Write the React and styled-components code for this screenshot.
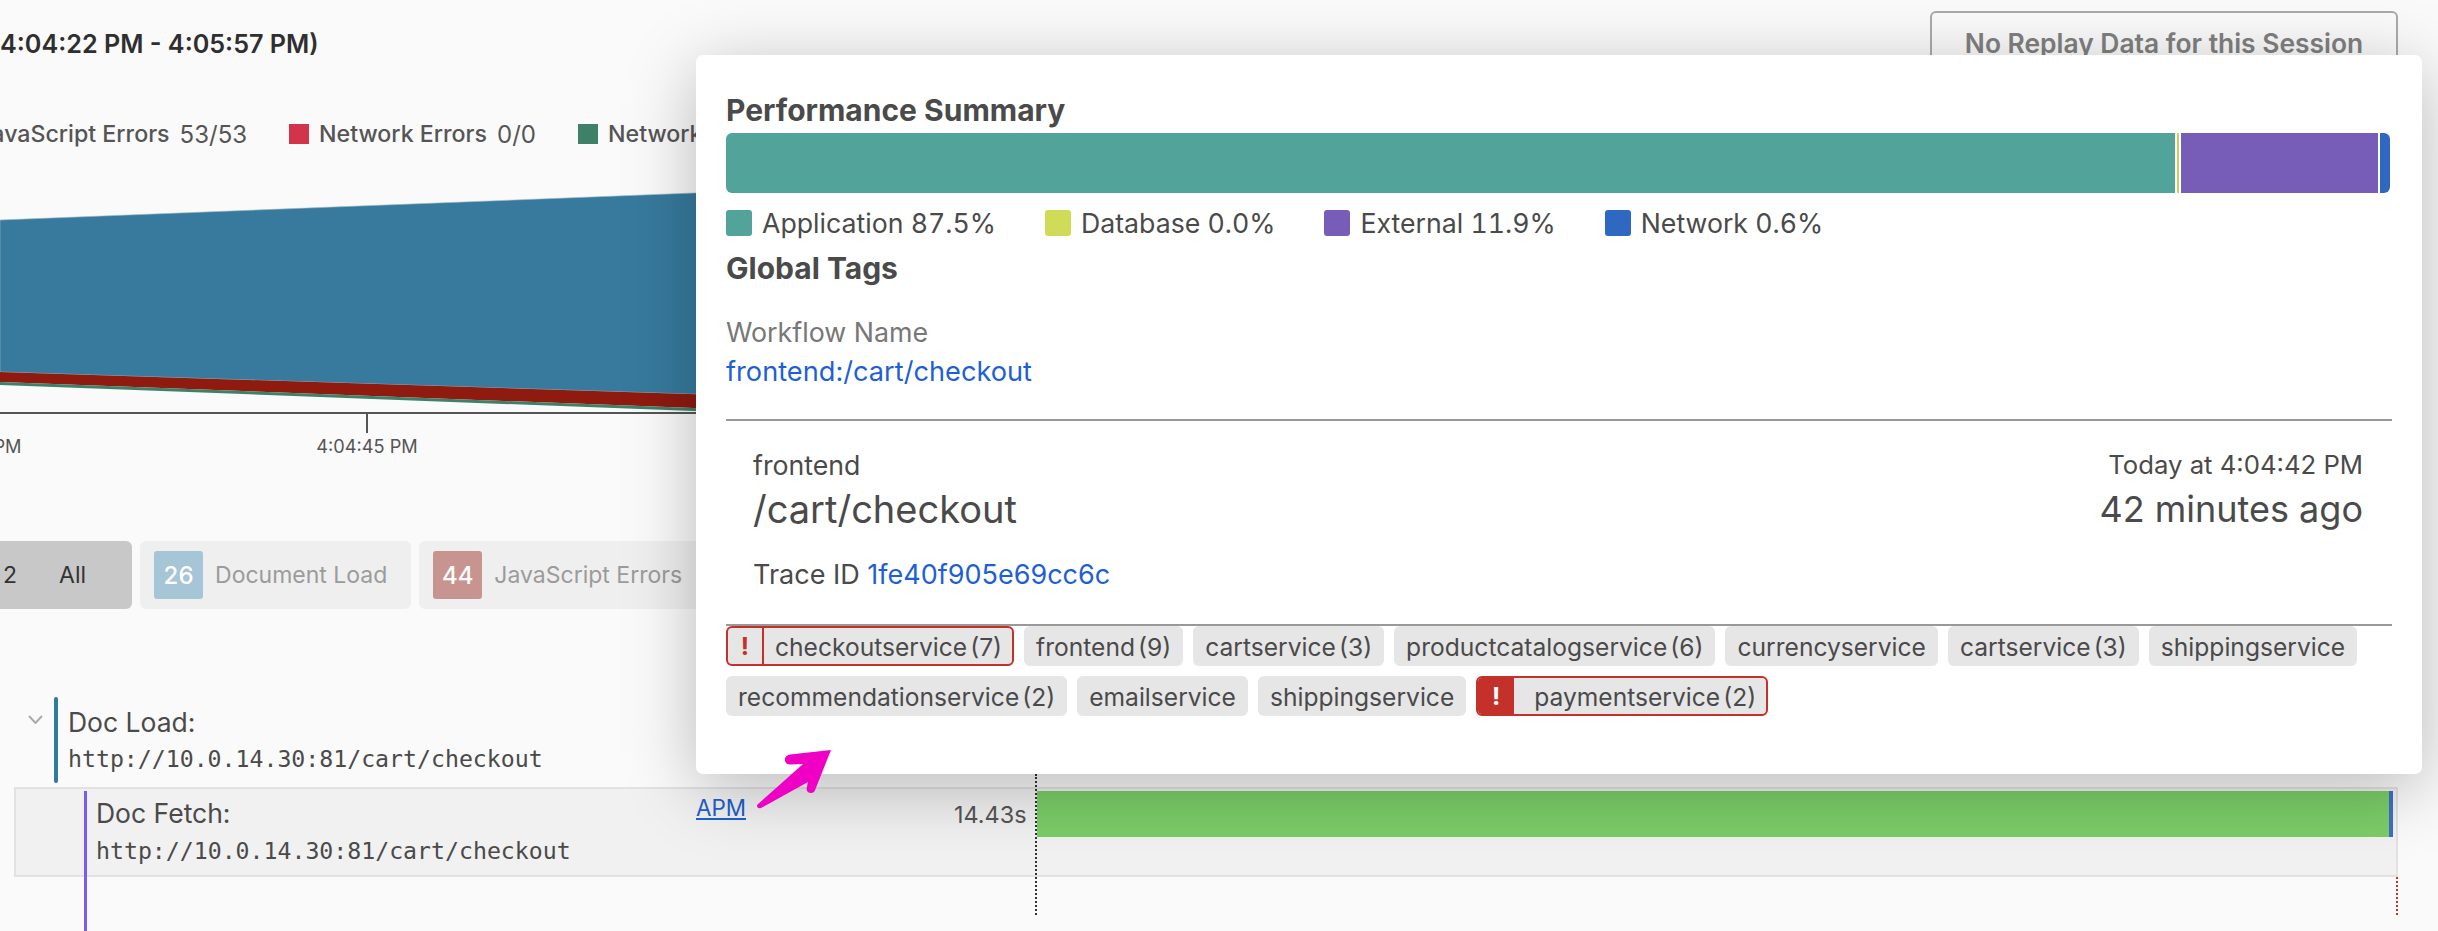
import React from 'react';
import styled, { createGlobalStyle } from 'styled-components';

const GlobalStyle = createGlobalStyle`
  html, body {
    margin: 0;
    padding: 0;
    background: #fafafa;
  }
  body {
    font-family: Inter, "Noto Sans", sans-serif;
    color: #4a4a4a;
  }
`;

const Page = styled.div`
  position: relative;
  width: 2438px;
  height: 931px;
  overflow: hidden;
  background: #fafafa;
`;

const Header = styled.header`
  display: flex;
  justify-content: space-between;
  align-items: flex-start;
  box-sizing: border-box;
  height: 100px;
  padding: 11px 40px 0 0;
`;

const SessionTitle = styled.h1`
  margin: 16px 0 0;
  font-size: 25.2px;
  line-height: 34px;
  font-weight: 600;
  color: #2f2f2f;
`;

const ReplayButton = styled.button`
  width: 468px;
  height: 64px;
  border: 2px solid #aaa;
  border-radius: 6px;
  background: transparent;
  font-family: inherit;
  font-size: 26.4px;
  font-weight: 600;
  color: #808080;
`;

const Legend = styled.div`
  display: flex;
  align-items: center;
  gap: 42px;
  height: 22px;
  margin: 23px 0 0 -22px;
`;

const LegendItem = styled.div`
  display: flex;
  align-items: center;
  gap: 10px;
  font-size: 24px;
  white-space: nowrap;
  color: #555;

  b {
    font-size: 23.2px;
    font-weight: 500;
  }
`;

const LegendSwatch = styled.span`
  width: 20px;
  height: 20px;
  background: ${props => props.$color};
`;

const Chart = styled.svg`
  display: block;
  width: 720px;
  height: 290px;
  margin-top: 35px;
`;

const AxisLabel = styled.text`
  font-size: 18.2px;
  fill: #555;
  text-anchor: middle;
`;

const Tabs = styled.div`
  display: flex;
  gap: 8px;
  height: 68px;
  margin: 71px 0 0 0;
`;

const Tab = styled.div`
  display: flex;
  align-items: center;
  flex-shrink: 0;
  gap: 12px;
  padding: 0 24px 0 14px;
  border-radius: 6px;
  background: #efefef;
  font-size: 23px;
  color: #9b9b9b;
  white-space: nowrap;
`;

const AllTab = styled(Tab)`
  gap: 42px;
  padding: 0 46px 0 3px;
  border-radius: 0 6px 6px 0;
  background: #c8c8c8;
  color: #333;
`;

const TabCount = styled.span`
  display: flex;
  align-items: center;
  justify-content: center;
  width: 49px;
  height: 48px;
  border-radius: 3px;
  background: ${props => props.$color};
  color: #fff;
  font-size: 24px;
  font-weight: 500;
`;

const TraceRows = styled.div`
  margin-top: 88px;
`;

const ParentRow = styled.div`
  display: flex;
  height: 86px;
  padding-left: 28px;
`;

const Chevron = styled.svg`
  width: 15px;
  height: 9px;
  margin: 18px 11px 0 0;
`;

const TreeBar = styled.div`
  flex-shrink: 0;
  width: 4px;
  height: 86px;
  border-radius: 2px;
  background: #2f7a9f;
`;

const SpanText = styled.div`
  padding-left: 10px;
`;

const SpanName = styled.div`
  font-size: 26.5px;
  line-height: 34px;
  margin-top: 8px;
`;

const SpanUrl = styled.div`
  font-family: "DejaVu Sans Mono", monospace;
  font-size: 23.2px;
  line-height: 36px;
  margin-top: 2px;
  white-space: nowrap;
`;

const FetchRow = styled.div`
  position: relative;
  display: flex;
  box-sizing: border-box;
  width: 2384px;
  height: 90px;
  margin: 4px 0 0 14px;
  border: 2px solid #e2e2e2;
  background: #f1f1f1;
`;

const FetchLine = styled.div`
  position: absolute;
  top: 2px;
  left: 68px;
  width: 3px;
  height: 150px;
  background: #7a5cf0;
`;

const FetchLabel = styled.div`
  width: 680px;
  flex-shrink: 0;
  padding-left: 80px;
  box-sizing: border-box;

  ${SpanName} {
    margin-top: 7px;
  }

  ${SpanUrl} {
    margin-top: 3px;
  }
`;

const ApmLink = styled.a`
  width: 258px;
  margin-top: 4px;
  flex-shrink: 0;
  font-size: 22.4px;
  line-height: 30px;
  color: #2160cc;
  text-decoration: underline;
`;

const Duration = styled.div`
  width: 80px;
  flex-shrink: 0;
  margin-top: 11px;
  font-size: 23.4px;
  line-height: 30px;
  text-align: right;
  padding-right: 8px;
  box-sizing: border-box;
  color: #555;
`;

const Waterfall = styled.div`
  display: flex;
  width: 1356px;
  height: 46px;
  margin: 2px 0 0 3px;
  background: #7bcd68;
`;

const WaterfallEnd = styled.div`
  width: 4px;
  margin-left: auto;
  background: #3f6fc8;
`;

const DashedLine = styled.div`
  position: absolute;
  left: ${props => props.$left}px;
  top: ${props => props.$top}px;
  height: ${props => props.$height}px;
  border-left: 2px dotted ${props => props.$color};
`;

const Panel = styled.section`
  position: absolute;
  top: 55px;
  left: 696px;
  box-sizing: border-box;
  width: 1726px;
  height: 719px;
  padding: 36px 30px 0;
  border-radius: 7px;
  background: #fff;
  box-shadow: 0 14px 70px rgba(0, 0, 0, 0.26);
`;

const PanelHeading = styled.h2`
  margin: 0;
  font-size: 30px;
  line-height: 38px;
  font-weight: 700;
  color: #4a4a4a;
`;

const SummaryBar = styled.div`
  display: flex;
  gap: 2px;
  width: 1664px;
  height: 60px;
  margin-top: 4px;
  border-radius: 6px;
  overflow: hidden;
`;

const SummarySegment = styled.div`
  width: ${props => props.$width}px;
  background: ${props => props.$color};
`;

const SummaryLegend = styled.div`
  display: flex;
  gap: 49px;
  height: 26px;
  margin: 17px 0 13px;
`;

const SummaryItem = styled.div`
  display: flex;
  align-items: center;
  gap: 10px;
  font-size: 26.7px;
  font-variant-numeric: tabular-nums;
  color: #4a4a4a;
  white-space: nowrap;
`;

const SummarySwatch = styled.span`
  width: 26px;
  height: 26px;
  border-radius: 3px;
  background: ${props => props.$color};
`;

const FieldLabel = styled.div`
  margin-top: 27px;
  font-size: 26.8px;
  line-height: 36px;
  color: #777;
`;

const BlueLink = styled.a`
  color: #1f5fd6;
`;

const WorkflowLink = styled(BlueLink)`
  display: block;
  margin-top: 4px;
  font-size: 27.2px;
  line-height: 36px;
`;

const Divider = styled.hr`
  width: 1666px;
  height: 2px;
  margin: ${props => props.$margin};
  border: none;
  background: #999;
`;

const TraceHead = styled.div`
  display: flex;
  justify-content: space-between;
  padding: 0 29px 0 27px;
`;

const TraceCol = styled.div`
  text-align: ${props => props.$align || 'left'};
`;

const TraceSmall = styled.div`
  margin-top: 26px;
  font-size: ${props => props.$size}px;
  line-height: 36px;
`;

const TraceLarge = styled.div`
  margin-top: 4px;
  font-size: ${props => props.$size}px;
  line-height: 44px;
`;

const TraceId = styled.div`
  margin-top: 26px;
  padding-left: 27px;
  font-size: 27px;
  line-height: 36px;
`;

const TagList = styled.div`
  display: flex;
  flex-wrap: wrap;
  gap: 10px;
  width: 1664px;
`;

const Tag = styled.div`
  display: flex;
  align-items: center;
  box-sizing: border-box;
  height: 40px;
  padding: 2px 12px 0;
  border-radius: 6px;
  background: #e6e6e6;
  font-size: 24.6px;
  color: #4a4a4a;
  white-space: nowrap;
`;

const TagCount = styled.span`
  margin-left: 3px;
`;

const ErrorTag = styled(Tag)`
  padding: 2px 10px 0 0;
  border: 2px solid #c4312b;
  overflow: hidden;
`;

const ErrorMark = styled.span`
  display: flex;
  align-items: center;
  justify-content: center;
  align-self: stretch;
  box-sizing: content-box;
  width: ${props => (props.$filled ? '36px' : '34px')};
  margin: -2px ${props => (props.$filled ? '20px' : '11px')} 0 0;
  font-weight: 700;
  background: ${props => (props.$filled ? '#c4312b' : 'transparent')};
  color: ${props => (props.$filled ? '#fff' : '#c4312b')};
  border-right: ${props => (props.$filled ? 'none' : '2px solid #c4312b')};
`;

const Arrow = styled.svg`
  position: absolute;
  left: 750px;
  top: 745px;
  width: 90px;
  height: 70px;
`;

const summary = [
  { color: '#52a399', width: 1449 },
  { color: '#c9d34d', width: 2 },
  { color: '#775cb8', width: 197 },
  { color: '#2e68c0', width: 10 },
];

const summaryLegend = [
  { color: '#52a399', label: 'Application', value: '87.5%' },
  { color: '#d0dc58', label: 'Database', value: '0.0%' },
  { color: '#775cb8', label: 'External', value: '11.9%' },
  { color: '#2e68c0', label: 'Network', value: '0.6%' },
];

const tags = [
  { name: 'checkoutservice', count: 7, error: 'outline' },
  { name: 'frontend', count: 9 },
  { name: 'cartservice', count: 3 },
  { name: 'productcatalogservice', count: 6 },
  { name: 'currencyservice' },
  { name: 'cartservice', count: 3 },
  { name: 'shippingservice' },
  { name: 'recommendationservice', count: 2 },
  { name: 'emailservice' },
  { name: 'shippingservice' },
  { name: 'paymentservice', count: 2, error: 'filled' },
];

function ServiceTag({ name, count, error }) {
  const Wrapper = error ? ErrorTag : Tag;
  return (
    <Wrapper>
      {error && <ErrorMark $filled={error === 'filled'}>!</ErrorMark>}
      {name}
      {count && <TagCount>({count})</TagCount>}
    </Wrapper>
  );
}

export default function App() {
  return (
    <Page>
      <GlobalStyle />
      <Header>
        <SessionTitle>4:04:22 PM - 4:05:57 PM)</SessionTitle>
        <ReplayButton>No Replay Data for this Session</ReplayButton>
      </Header>

      <Legend>
        <LegendItem><b>JavaScript Errors</b> 53/53</LegendItem>
        <LegendItem><LegendSwatch $color="#d1344b" /><b>Network Errors</b> 0/0</LegendItem>
        <LegendItem><LegendSwatch $color="#3f8068" /><b>Network</b></LegendItem>
      </Legend>

      <Chart viewBox="0 0 720 290">
        <polygon points="0,40 720,12 720,215 0,192" fill="#377a9d" stroke="#9fb8c6" strokeWidth="0.6" />
        <polygon points="0,192 720,215 720,229 0,202" fill="#8f1a10" />
        <polygon points="0,202 720,229 720,232 0,205" fill="#3f8068" />
        <rect x="0" y="232" width="720" height="2" fill="#555" />
        <rect x="366" y="233" width="2" height="20" fill="#555" />
        <AxisLabel x="-29" y="273">4:04:35 PM</AxisLabel>
        <AxisLabel x="367" y="273">4:04:45 PM</AxisLabel>
      </Chart>

      <Tabs>
        <AllTab>2<span>All</span></AllTab>
        <Tab><TabCount $color="#a6c5d7">26</TabCount>Document Load</Tab>
        <Tab><TabCount $color="#c89490">44</TabCount>JavaScript Errors</Tab>
      </Tabs>

      <TraceRows>
        <ParentRow>
          <Chevron viewBox="0 0 15 9">
            <path d="M1 1 L7.5 8 L14 1" fill="none" stroke="#aaa" strokeWidth="2" />
          </Chevron>
          <TreeBar />
          <SpanText>
            <SpanName>Doc Load:</SpanName>
            <SpanUrl>http://10.0.14.30:81/cart/checkout</SpanUrl>
          </SpanText>
        </ParentRow>
        <FetchRow>
          <FetchLine />
          <FetchLabel>
            <SpanName>Doc Fetch:</SpanName>
            <SpanUrl>http://10.0.14.30:81/cart/checkout</SpanUrl>
          </FetchLabel>
          <ApmLink>APM</ApmLink>
          <Duration>14.43s</Duration>
          <Waterfall><WaterfallEnd /></Waterfall>
        </FetchRow>
      </TraceRows>

      <DashedLine $left={1035} $top={774} $height={141} $color="#333" />
      <DashedLine $left={2396} $top={877} $height={38} $color="#c4312b" />

      <Panel>
        <PanelHeading>Performance Summary</PanelHeading>
        <SummaryBar>
          {summary.map(segment => (
            <SummarySegment key={segment.color} $color={segment.color} $width={segment.width} />
          ))}
        </SummaryBar>
        <SummaryLegend>
          {summaryLegend.map(item => (
            <SummaryItem key={item.label}>
              <SummarySwatch $color={item.color} />
              {item.label} {item.value}
            </SummaryItem>
          ))}
        </SummaryLegend>
        <PanelHeading>Global Tags</PanelHeading>
        <FieldLabel>Workflow Name</FieldLabel>
        <WorkflowLink>frontend:/cart/checkout</WorkflowLink>
        <Divider $margin="29px 0 0" />
        <TraceHead>
          <TraceCol>
            <TraceSmall $size={26.7}>frontend</TraceSmall>
            <TraceLarge $size={38}>/cart/checkout</TraceLarge>
          </TraceCol>
          <TraceCol $align="right">
            <TraceSmall $size={25.7}>Today at 4:04:42 PM</TraceSmall>
            <TraceLarge $size={36}>42 minutes ago</TraceLarge>
          </TraceCol>
        </TraceHead>
        <TraceId>Trace ID <BlueLink>1fe40f905e69cc6c</BlueLink></TraceId>
        <Divider $margin="31px 0 0" />
        <TagList>
          {tags.map((tag, index) => (
            <ServiceTag key={index} {...tag} />
          ))}
        </TagList>
      </Panel>

      <Arrow viewBox="750 745 90 70">
        <path
          d="M831 750 L790 754.5 Q784 756 785 761 Q786 764.5 790 764.5 L803 764 L757 805 Q757 809 761 808 L808 782 L806.5 789 Q807 793 811 793 Q814.5 793 815.5 789 Z"
          fill="#ee00c4"
        />
      </Arrow>
    </Page>
  );
}
